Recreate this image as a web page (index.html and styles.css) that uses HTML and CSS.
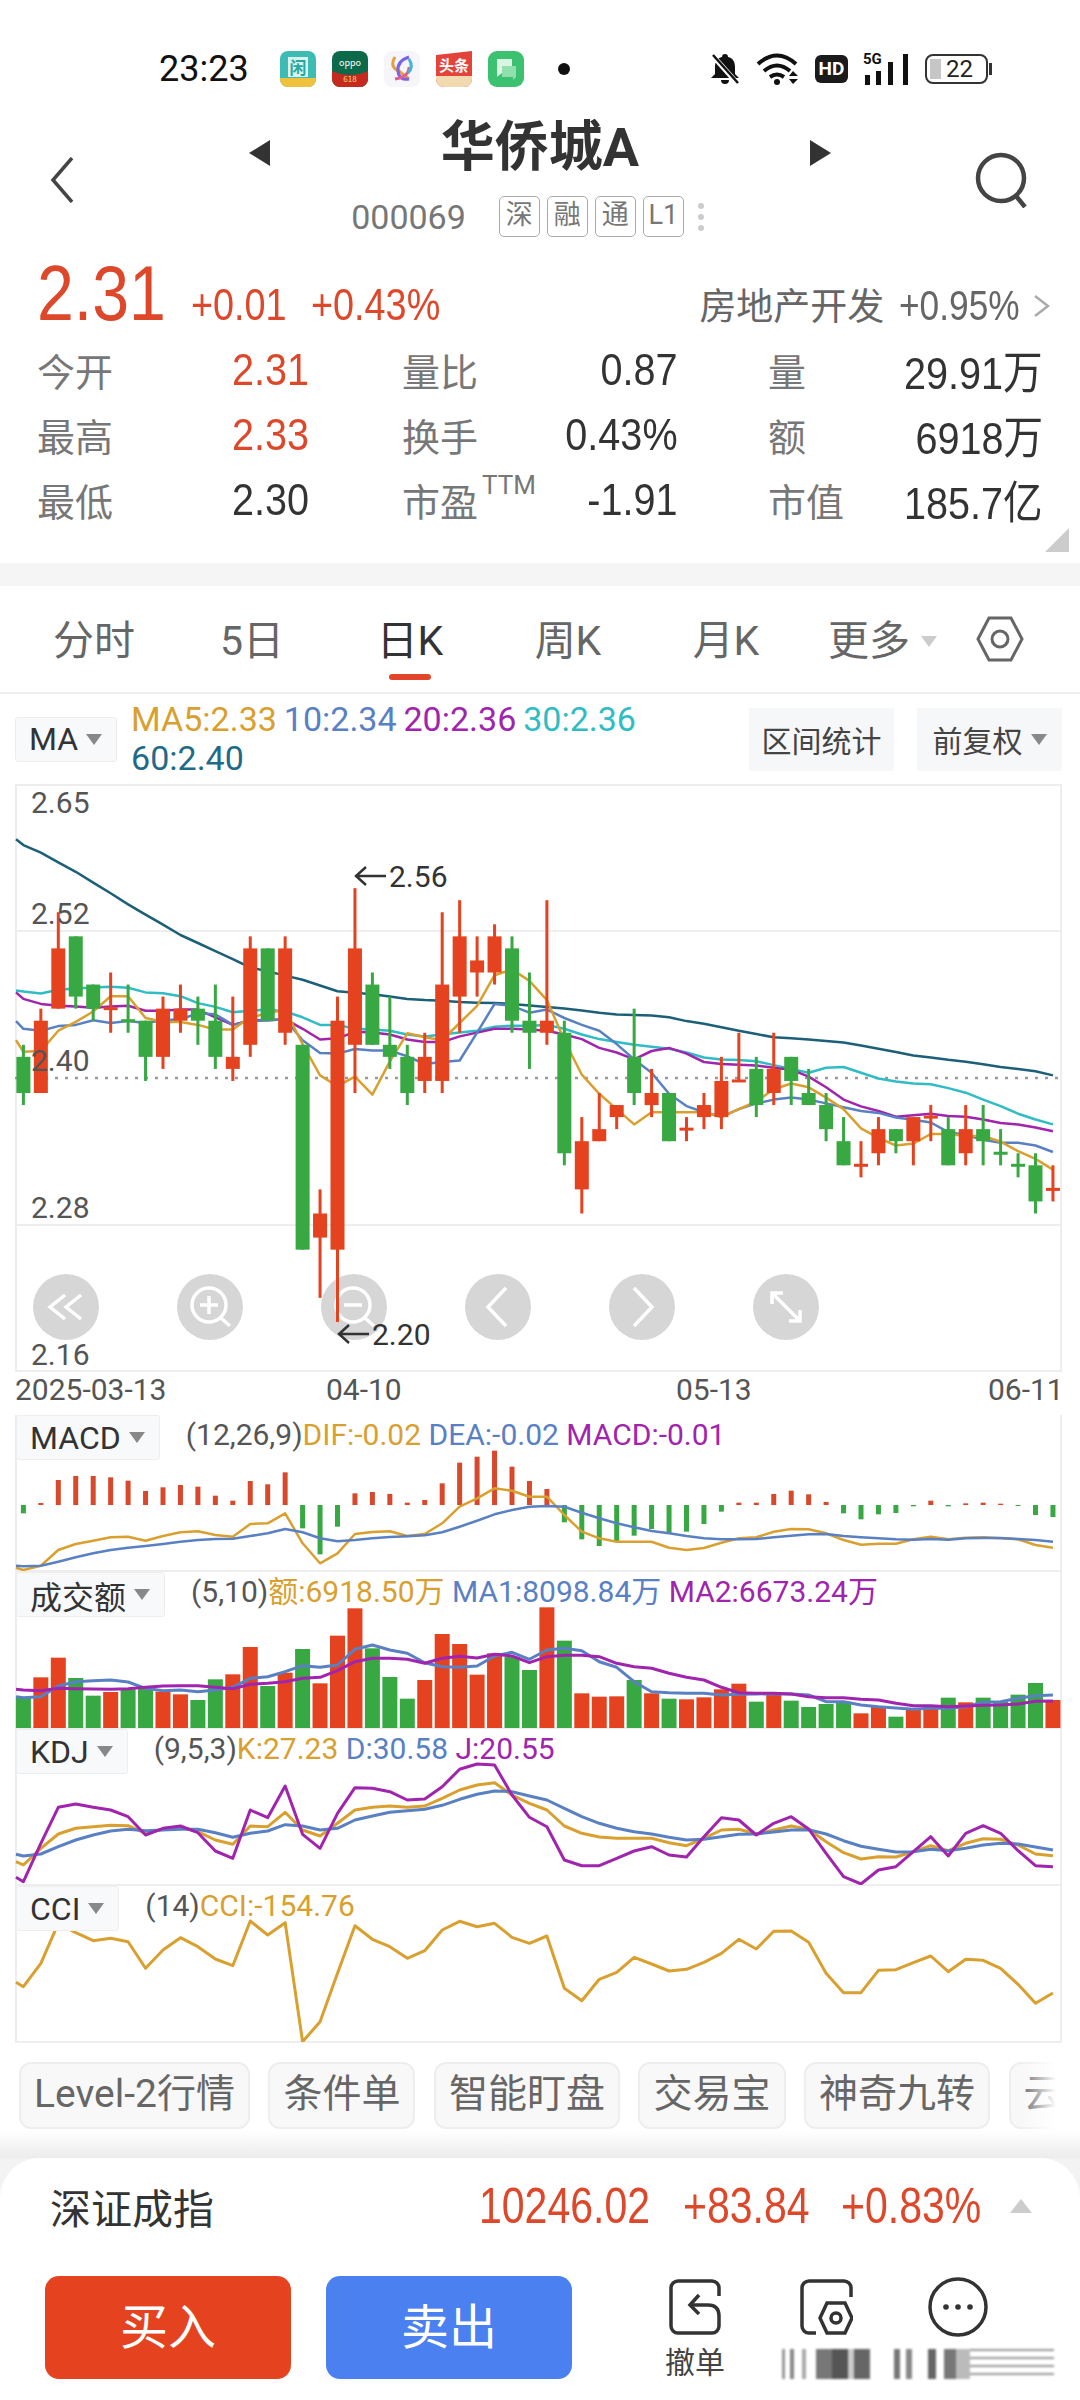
FILE: index.html
```html
<!DOCTYPE html>
<html lang="zh-CN">
<head>
    <meta charset="UTF-8">
    <meta name="viewport" content="width=device-width, initial-scale=1.0">
    <title>华侨城A</title>
    <link rel="stylesheet" href="styles.css">
</head>
<body>
    <div class="status">
        <span class="clock">23:23</span>
        <div class="app-icons">
            <svg class="app" viewBox="0 0 36 36"><rect width="36" height="36" rx="8" fill="#3dbcb4"/><path d="M0 27h36v1a8 8 0 0 1-8 8H8a8 8 0 0 1-8-8z" fill="#eec23d"/><rect x="8" y="6" width="20" height="20" fill="#d9f3ef"/><text x="18" y="23" class="app-text app-mid">闲</text></svg>
            <svg class="app" viewBox="0 0 36 36"><rect width="36" height="36" rx="8" fill="#0c6a4a"/><path d="M0 20q18 8 36 0v8a8 8 0 0 1-8 8H8a8 8 0 0 1-8-8z" fill="#c62a1f"/><text x="18" y="15" class="app-text app-tiny">oppo</text><text x="18" y="31" class="app-text app-tiny2">618</text></svg>
            <svg class="app" viewBox="0 0 36 36"><rect width="36" height="36" rx="8" fill="#f6f5fa"/><path d="M11 6q-6 10 4 14l10 8" fill="none" stroke="#e5a23c" stroke-width="3"/><path d="M25 6q-12 4-11 14t11 8" fill="none" stroke="#7a63e8" stroke-width="3"/><path d="M11 28q14-2 14-12" fill="none" stroke="#e45c8e" stroke-width="3"/><path d="M25 8q5 8-1 14" fill="none" stroke="#45b4d8" stroke-width="3"/></svg>
            <svg class="app" viewBox="0 0 36 36"><path d="M0 4l36-4v28a8 8 0 0 1-8 8H8a8 8 0 0 1-8-8z" fill="#e4433b"/><path d="M0 25h36v3a8 8 0 0 1-8 8H8a8 8 0 0 1-8-8z" fill="#f1d9b0"/><text x="18" y="20" class="app-text app-head">头条</text></svg>
            <svg class="app" viewBox="0 0 36 36"><rect width="36" height="36" rx="9" fill="#3cc170"/><path d="M9 8h15v14H14l-5 4z" fill="#d9f5e2"/><path d="M14 15h14v11l-3 3v-3H14z" fill="#8fe0ad"/></svg>
        </div>
        <i class="status-dot"></i>
        <div class="sys-icons">
            <svg width="32" height="32" viewBox="0 0 32 32"><path d="M16 1a3 3 0 0 1 3 3c5 1 7 5 7 10v7l4 4H2l4-4v-7c0-5 2-9 7-10a3 3 0 0 1 3-3zM12 27h8a4 4 0 0 1-8 0z" fill="#111"/><path d="M4 3l24 27" stroke="#fff" stroke-width="5"/><path d="M4 2l25 28" stroke="#111" stroke-width="2.5"/></svg>
            <svg width="44" height="32" viewBox="0 0 44 32" fill="none" stroke="#111" stroke-width="4"><path d="M2 11q19-17 38 0M8 18q13-11 26 0M14 24q7-5 14 0"/><circle cx="21" cy="29" r="3" fill="#111" stroke="none"/><path d="M33 23l4-5 5 5zM33 26h9l-5 5z" fill="#111" stroke="none"/></svg>
            <span class="hd">HD</span>
            <div class="signal">
                <span class="signal-label">5G</span>
                <svg width="47" height="31" viewBox="0 0 47 31" fill="#111"><rect x="2" y="21" width="5" height="10"/><rect x="13" y="17" width="5" height="14"/><rect x="25" y="8" width="5" height="23"/><rect x="40" y="0" width="5" height="31"/></svg>
            </div>
            <div class="battery"><i class="battery-level"></i><span>22</span></div>
        </div>
    </div>

    <div class="header">
        <svg class="back" width="24" height="46" viewBox="0 0 24 46" fill="none" stroke="#444" stroke-width="3.5"><path d="M22 1L3 23l19 22"/></svg>
        <i class="nav-arrow prev"></i>
        <div class="stock">
            <h1>华侨城A</h1>
            <div class="stock-meta">
                <span class="stock-code">000069</span>
                <span class="tag">深</span>
                <span class="tag">融</span>
                <span class="tag">通</span>
                <span class="tag">L1</span>
                <span class="tag-more"><i></i><i></i><i></i></span>
            </div>
        </div>
        <i class="nav-arrow next"></i>
        <svg class="search" width="56" height="56" viewBox="0 0 56 56" fill="none" stroke="#444" stroke-width="4.5"><circle cx="26" cy="26" r="23"/><path d="M41 44l9 11"/></svg>
    </div>

    <div class="quote">
        <div class="quote-top">
            <span class="price red">2.31</span>
            <span class="change red">+0.01</span>
            <span class="change red">+0.43%</span>
            <div class="sector">
                <span>房地产开发</span>
                <span class="change sector-change">+0.95%</span>
                <svg width="17" height="25" viewBox="0 0 17 25" fill="none" stroke="#aaa" stroke-width="2.5"><path d="M2 1l13 10L2 21"/></svg>
            </div>
        </div>
        <div class="stats">
            <div class="stat stat-left"><span>今开</span><b class="red">2.31</b></div>
            <div class="stat stat-mid"><span>量比</span><b>0.87</b></div>
            <div class="stat stat-right"><span>量</span><b>29.91万</b></div>
            <div class="stat stat-left"><span>最高</span><b class="red">2.33</b></div>
            <div class="stat stat-mid"><span>换手</span><b>0.43%</b></div>
            <div class="stat stat-right"><span>额</span><b>6918万</b></div>
            <div class="stat stat-left"><span>最低</span><b>2.30</b></div>
            <div class="stat stat-mid"><span>市盈<sup>TTM</sup></span><b>-1.91</b></div>
            <div class="stat stat-right"><span>市值</span><b>185.7亿</b></div>
        </div>
        <i class="fold"></i>
    </div>

    <div class="band"></div>

    <div class="tabs">
        <span class="tab">分时</span>
        <span class="tab">5日</span>
        <span class="tab active">日K</span>
        <span class="tab">周K</span>
        <span class="tab">月K</span>
        <span class="tab-more">更多<i class="tri tri-light"></i></span>
        <svg class="tab-gear" width="48" height="46" viewBox="0 0 48 46" fill="none" stroke="#666" stroke-width="3"><path d="M13 2h22l11 21-11 21H13L2 23z"/><circle cx="24" cy="23" r="8"/></svg>
    </div>

    <div class="toolbar">
        <span class="pick">MA<i class="tri"></i></span>
        <div class="ma-legend">
            <span class="orange">MA5:2.33</span>
            <span class="blue">10:2.34</span>
            <span class="purple">20:2.36</span>
            <span class="cyan">30:2.36</span>
            <span class="teal">60:2.40</span>
        </div>
        <div class="toolbar-right">
            <span class="tool-btn">区间统计</span>
            <span class="tool-btn">前复权<i class="tri"></i></span>
        </div>
    </div>

    <div class="main-chart">
        <svg class="chart" viewBox="15 784 1047 588" width="1047" height="588">
            <path class="grid-line" d="M15 931H1062M15 1225H1062"/>
            <path class="mid-line" d="M15 1078H1062"/>
            <g id="priceLines" fill="none"></g>
            <g id="priceCandles"></g>
            <text class="axis" x="31" y="813">2.65</text>
            <text class="axis" x="31" y="924">2.52</text>
            <text class="axis" x="31" y="1071">2.40</text>
            <text class="axis" x="31" y="1218">2.28</text>
            <text class="axis" x="31" y="1365">2.16</text>
            <path class="marker" d="M386 876H356M366 867l-10 9 10 9"/>
            <text class="axis axis-dark" x="389" y="887">2.56</text>
            <path class="marker" d="M369 1334H339M349 1325l-10 9 10 9"/>
            <text class="axis axis-dark" x="372" y="1345">2.20</text>
        </svg>
        <div class="chart-tools">
            <svg class="round-btn" viewBox="0 0 66 66"><path d="M32 21L17 33l15 12M48 21L33 33l15 12"/></svg>
            <svg class="round-btn" viewBox="0 0 66 66"><circle cx="32" cy="31" r="17"/><path d="M23 31h18M32 22v18M44 44l9 8"/></svg>
            <svg class="round-btn" viewBox="0 0 66 66"><circle cx="32" cy="31" r="17"/><path d="M23 31h18M44 44l9 8"/></svg>
            <svg class="round-btn" viewBox="0 0 66 66"><path d="M41 14L23 33l18 19"/></svg>
            <svg class="round-btn" viewBox="0 0 66 66"><path d="M25 14l18 19-18 19"/></svg>
            <svg class="round-btn" viewBox="0 0 66 66"><path d="M19 19l28 28M19 30V19h11M47 36v11H36"/></svg>
        </div>
    </div>

    <div class="dates">
        <span>2025-03-13</span>
        <span>04-10</span>
        <span>05-13</span>
        <span>06-11</span>
    </div>

    <div class="panel">
        <div class="panel-head">
            <span class="pick">MACD<i class="tri"></i></span>
            <div class="panel-legend"><span class="muted">(12,26,9)</span><span class="orange">DIF:-0.02</span> <span class="blue">DEA:-0.02</span> <span class="purple">MACD:-0.01</span></div>
        </div>
        <svg id="macdChart" class="chart" viewBox="15 1415 1047 156" width="1047" height="156"></svg>
    </div>
    <div class="panel">
        <div class="panel-head">
            <span class="pick">成交额<i class="tri"></i></span>
            <div class="panel-legend"><span class="muted">(5,10)</span><span class="orange">额:6918.50万</span> <span class="blue">MA1:8098.84万</span> <span class="purple">MA2:6673.24万</span></div>
        </div>
        <svg id="volumeChart" class="chart" viewBox="15 1572 1047 156" width="1047" height="156"></svg>
    </div>
    <div class="panel">
        <div class="panel-head">
            <span class="pick">KDJ<i class="tri"></i></span>
            <div class="panel-legend"><span class="muted">(9,5,3)</span><span class="orange">K:27.23</span> <span class="blue">D:30.58</span> <span class="purple">J:20.55</span></div>
        </div>
        <svg id="kdjChart" class="chart" viewBox="15 1729 1047 156" width="1047" height="156"></svg>
    </div>
    <div class="panel">
        <div class="panel-head">
            <span class="pick">CCI<i class="tri"></i></span>
            <div class="panel-legend"><span class="muted">(14)</span><span class="orange">CCI:-154.76</span></div>
        </div>
        <svg id="cciChart" class="chart" viewBox="15 1886 1047 156" width="1047" height="156"></svg>
    </div>

    <div class="chips">
        <span class="chip">Level-2行情</span>
        <span class="chip">条件单</span>
        <span class="chip">智能盯盘</span>
        <span class="chip">交易宝</span>
        <span class="chip">神奇九转</span>
        <span class="chip">云</span>
    </div>

    <div class="dock-wrap">
        <div class="dock">
            <div class="index-row">
                <span class="index-name">深证成指</span>
                <span class="index-num index-value red">10246.02</span>
                <span class="index-num index-points red">+83.84</span>
                <span class="index-num index-rate red">+0.83%</span>
                <i class="index-arrow"></i>
            </div>
            <div class="actions">
                <span class="trade buy">买入</span>
                <span class="trade sell">卖出</span>
                <div class="quick">
                    <div class="quick-icons">
                        <svg width="54" height="56" viewBox="0 0 54 56" fill="none" stroke="#333" stroke-width="3.5"><path d="M51 17V9a7 7 0 0 0-7-7H10a7 7 0 0 0-7 7v38a7 7 0 0 0 7 7h34a7 7 0 0 0 7-7V37q0-11-11-11H24"/><path d="M31 16L22 26l9 9"/></svg>
                        <svg width="54" height="56" viewBox="0 0 54 56" fill="none" stroke="#333" stroke-width="3.5"><path d="M52 18V9a7 7 0 0 0-7-7H10a7 7 0 0 0-7 7v38a7 7 0 0 0 7 7h7"/><path d="M28 24h18l7 15-7 15H28l-7-15z"/><circle cx="37" cy="39" r="5"/></svg>
                        <svg width="60" height="60" viewBox="0 0 60 60" fill="none" stroke="#333" stroke-width="3.5"><circle cx="30" cy="30" r="28"/><circle cx="18" cy="30" r="2.8" fill="#333" stroke="none"/><circle cx="30" cy="30" r="2.8" fill="#333" stroke="none"/><circle cx="42" cy="30" r="2.8" fill="#333" stroke="none"/></svg>
                    </div>
                    <div class="quick-labels">
                        <span>撤单</span>
                        <div class="smudge"><i class="smudge-bars"></i><i class="smudge-lines"></i></div>
                    </div>
                </div>
            </div>
        </div>
    </div>

    <script src="charts.js"></script>
</body>
</html>
```

FILE: styles.css
```css
* {
    box-sizing: border-box;
}

body {
    margin: 0;
    width: 1080px;
    height: 2400px;
    overflow: hidden;
    background: #fff;
    color: #333;
    font-family: Roboto, "Noto Sans CJK SC", sans-serif;
}

i {
    display: block;
    font-style: normal;
}

.red { color: #dd472a; }
.orange { color: #d9a02f; }
.blue { color: #5a80c4; }
.purple { color: #a024ae; }
.cyan { color: #30bcc4; }
.teal { color: #1f6a88; }
.muted { color: #555; }

/* status bar */
.status {
    display: flex;
    align-items: center;
    height: 110px;
    padding: 48px 92px 20px 159px;
}

.clock {
    font-size: 36px;
    color: #111;
}

.app-icons {
    display: flex;
    gap: 16px;
    margin-left: 31px;
}

.app {
    width: 36px;
    height: 36px;
}

.app-text {
    font-family: "Noto Sans CJK SC", sans-serif;
    text-anchor: middle;
}

.app-mid { font-size: 17px; fill: #2ba69e; font-weight: 700; }
.app-tiny { font-size: 9px; fill: #fff; }
.app-tiny2 { font-size: 8px; fill: #f6d98a; }
.app-head { font-size: 15px; fill: #fff; font-weight: 700; }

.status-dot {
    width: 12px;
    height: 12px;
    margin-left: 34px;
    border-radius: 50%;
    background: #111;
}

.sys-icons {
    display: flex;
    align-items: center;
    gap: 15px;
    margin-left: auto;
}

.hd {
    width: 33px;
    height: 28px;
    border-radius: 6px;
    background: #1b1b1b;
    color: #fff;
    font-size: 19px;
    font-weight: 700;
    line-height: 28px;
    text-align: center;
}

.signal {
    position: relative;
    width: 47px;
    height: 31px;
}

.signal-label {
    position: absolute;
    top: -3px;
    left: 0;
    font-size: 15px;
    font-weight: 700;
    line-height: 16px;
    color: #111;
}

.battery {
    position: relative;
    width: 63px;
    height: 30px;
    border: 2px solid #333;
    border-radius: 8px;
    font-size: 24px;
    line-height: 26px;
    text-align: center;
    color: #222;
}

.battery::after {
    content: "";
    position: absolute;
    top: 7px;
    right: -6px;
    width: 3px;
    height: 12px;
    background: #333;
}

.battery span {
    position: relative;
    margin-left: 6px;
}

.battery-level {
    position: absolute;
    top: 3px;
    bottom: 3px;
    left: 3px;
    width: 11px;
    background: #c6c6c6;
}

/* header */
.header {
    display: flex;
    align-items: flex-start;
    height: 140px;
    padding: 5px 49px 0 50px;
}

.back {
    margin-top: 42px;
}

.nav-arrow {
    width: 0;
    height: 0;
    margin-top: 25px;
    border-top: 13px solid transparent;
    border-bottom: 13px solid transparent;
}

.prev {
    margin-left: 175px;
    border-right: 21px solid #333;
}

.next {
    border-left: 21px solid #333;
}

.search {
    margin-top: 37px;
    margin-left: 144px;
}

.stock {
    flex: 1;
    display: flex;
    flex-direction: column;
    align-items: center;
}

.stock h1 {
    margin: 0;
    font-size: 54px;
    font-weight: 700;
    line-height: 66px;
    color: #333;
}

.stock-meta {
    display: flex;
    align-items: center;
    margin-top: 15px;
    padding-right: 25px;
}

.stock-code {
    margin-right: 33px;
    font-size: 34px;
    color: #777;
}

.tag {
    width: 41px;
    height: 41px;
    margin-right: 7px;
    border: 1.5px solid #aaa;
    border-radius: 5px;
    color: #777;
    font-size: 27px;
    line-height: 37px;
    text-align: center;
}

.tag-more {
    display: flex;
    flex-direction: column;
    gap: 5px;
    margin-left: 7px;
}

.tag-more i {
    width: 6px;
    height: 6px;
    border-radius: 50%;
    background: #ccc;
}

/* quote: the digits of this block are a narrow face, Liberation Sans squeezed */
.quote {
    position: relative;
    height: 313px;
    padding-left: 37px;
}

.quote-top {
    display: flex;
    align-items: baseline;
    height: 87px;
    padding-right: 30px;
}

.price,
.change,
.stat b,
.index-num {
    display: inline-block;
    font-family: "Liberation Sans", "Noto Sans CJK SC", sans-serif;
    font-weight: 400;
    transform: scaleX(0.82);
    transform-origin: left center;
}

.price {
    margin-right: 4px;
    font-size: 77px;
    line-height: 86px;
    transform: scaleX(0.86);
}

.change {
    margin-right: 6px;
    font-size: 45px;
    transform: scaleX(0.84);
}

.sector {
    display: flex;
    align-items: baseline;
    margin-left: auto;
    color: #666;
    font-size: 37px;
}

.sector-change {
    margin: 0 -10px 0 15px;
    font-size: 42px;
    color: #666;
}

.stats {
    display: grid;
    grid-template-columns: 365px 366px 275px;
    grid-auto-rows: 65px;
}

.stat {
    display: flex;
    align-items: center;
    justify-content: space-between;
    color: #777;
    font-size: 38px;
}

.stat b {
    color: #333;
    font-size: 45px;
    transform: scaleX(0.88);
    transform-origin: right center;
}

.stat b.red {
    color: #dd472a;
}

.stat-left {
    justify-content: flex-start;
}

.stat-left span {
    width: 195px;
}

.stat-left b {
    transform-origin: left center;
}

.stat-mid {
    width: 276px;
}

.stat sup {
    margin-left: 4px;
    font-size: 26px;
    line-height: 0;
    vertical-align: 22px;
}

.fold {
    position: absolute;
    right: 11px;
    bottom: 11px;
    width: 0;
    height: 0;
    border-left: 24px solid transparent;
    border-bottom: 24px solid #ccc;
}

.band {
    height: 23px;
    background: #f5f5f5;
}

/* period tabs */
.tabs {
    display: flex;
    align-items: flex-start;
    height: 108px;
    padding: 30px 0 0 15px;
    border-bottom: 2px solid #eee;
    color: #666;
    font-size: 41px;
    line-height: 50px;
}

.tab {
    position: relative;
    width: 158px;
    height: 50px;
    text-align: center;
}

.tab.active {
    color: #333;
}

.tab.active::after {
    content: "";
    position: absolute;
    top: 58px;
    left: 58px;
    width: 42px;
    height: 6px;
    border-radius: 3px;
    background: #e2452a;
}

.tab-more {
    display: flex;
    align-items: center;
    margin-left: 23px;
}

.tab-more .tri {
    margin-left: 11px;
}

.tab-gear {
    margin: 0 0 0 39px;
}

.tri {
    display: inline-block;
    width: 0;
    height: 0;
    margin-left: 8px;
    border-left: 8px solid transparent;
    border-right: 8px solid transparent;
    border-top: 11px solid #888;
}

.tri-light {
    border-top-color: #ccc;
}

/* MA toolbar */
.toolbar {
    display: flex;
    align-items: center;
    height: 90px;
    padding: 0 18px 0 15px;
}

.pick {
    display: inline-flex;
    align-items: center;
    height: 45px;
    padding: 0 14px 0 13px;
    border: 1px solid #eee;
    border-radius: 3px;
    background: #f8f9fb;
    color: #333;
    font-size: 32px;
}

.ma-legend {
    width: 520px;
    margin-left: 14px;
    font-size: 34px;
    line-height: 39px;
    word-spacing: -1.5px;
}

.toolbar-right {
    display: flex;
    gap: 23px;
    margin-left: auto;
}

.tool-btn {
    display: flex;
    align-items: center;
    justify-content: center;
    width: 145px;
    height: 63px;
    background: #f6f7f9;
    color: #444;
    font-size: 30px;
}

/* charts */
.main-chart,
.panel {
    position: relative;
    width: 1047px;
    margin-left: 15px;
    border: solid #eee;
    border-width: 0 2px 0 2px;
}

.main-chart {
    height: 588px;
    border-width: 2px 2px 2px 2px;
}

.chart {
    display: block;
    margin: 0 -2px;
}

.main-chart .chart {
    position: relative;
    z-index: 1;
    margin: -2px -2px;
}

.grid-line {
    fill: none;
    stroke: #eee;
    stroke-width: 2;
}

.mid-line {
    fill: none;
    stroke: #999;
    stroke-width: 2.5;
    stroke-dasharray: 3 7;
}

.axis {
    fill: #555;
    font-size: 30px;
}

.axis-dark {
    fill: #333;
}

.marker {
    fill: none;
    stroke: #333;
    stroke-width: 2.5;
}

.chart-tools {
    position: absolute;
    top: 488px;
    left: 16px;
    display: flex;
    gap: 78px;
}

.round-btn {
    width: 66px;
    height: 66px;
    border-radius: 50%;
    background: #d6d6d6;
    fill: none;
    stroke: #fff;
    stroke-width: 3.5;
}

.dates {
    display: grid;
    grid-template-columns: 311px 350px 312px auto;
    align-items: center;
    height: 43px;
    padding: 0 0 7px 15px;
    color: #555;
    font-size: 30px;
    line-height: 34px;
}

.panel {
    height: 157px;
    border-bottom-width: 2px;
}

.panel-head {
    position: absolute;
    top: 0;
    left: -1px;
    display: flex;
    align-items: center;
}

.panel-legend {
    margin: -5px 0 0 26px;
    font-size: 30px;
    line-height: 40px;
    white-space: nowrap;
}

/* shortcut chips */
.chips {
    position: relative;
    display: flex;
    gap: 18.5px;
    height: 115px;
    padding: 19px 0 0 19px;
    overflow: hidden;
    background: linear-gradient(#fff 76%, #ececec);
}

.chips::after {
    content: "";
    position: absolute;
    top: 19px;
    right: 0;
    width: 60px;
    height: 67px;
    background: linear-gradient(90deg, rgba(255, 255, 255, 0), #fff 60%);
}

.chip {
    flex: none;
    height: 67px;
    padding: 0 13px;
    border: 2px solid #eee;
    border-radius: 12px;
    background: #f8f8f8;
    color: #666;
    font-size: 39px;
    line-height: 60px;
}

/* bottom dock */
.dock-wrap {
    background: #f3f3f3;
}

.dock {
    height: 243px;
    border-radius: 40px 40px 0 0;
    background: #fff;
}

.index-row {
    display: flex;
    align-items: center;
    height: 118px;
    padding: 0 0 22px 50px;
}

.index-name {
    width: 160px;
    font-size: 41px;
    white-space: nowrap;
    color: #333;
}

.index-num {
    font-size: 50px;
}

.index-value {
    margin: 0 -5px 0 269px;
}

.index-points {
    margin-right: 4px;
}

.index-rate {
    margin-right: -2px;
}

.index-arrow {
    width: 0;
    height: 0;
    border-left: 11px solid transparent;
    border-right: 11px solid transparent;
    border-bottom: 14px solid #ccc;
}

.actions {
    display: flex;
    padding-left: 45px;
}

.trade {
    width: 246px;
    height: 103px;
    border-radius: 14px;
    color: #fff;
    font-size: 48px;
    line-height: 103px;
    text-align: center;
}

.buy {
    background: #e5431f;
}

.sell {
    margin-left: 35px;
    background: #4a80ef;
}

.quick {
    margin-left: 93px;
}

.quick-icons {
    display: flex;
    align-items: center;
    gap: 77px;
    height: 62px;
    padding-left: 3px;
}

.quick-icons svg:last-child {
    margin-left: -2px;
}

.quick-labels {
    display: flex;
    align-items: center;
    gap: 57px;
    margin-top: 8px;
    color: #444;
    font-size: 30px;
    line-height: 32px;
}

.smudge {
    display: flex;
    width: 272px;
    height: 30px;
    margin-top: 3px;
    filter: blur(1.2px);
}

.smudge-bars {
    width: 188px;
    background: linear-gradient(90deg, #999 0 3px, #fff 3px 8px, #888 8px 12px, #fff 12px 20px, #aaa 20px 24px, #fff 24px 34px, #777 34px 50px, #555 50px 66px, #ccc 66px 72px, #666 72px 88px, #fff 88px 112px, #777 112px 118px, #fff 118px 124px, #888 124px 130px, #fff 130px 146px, #666 146px 154px, #fff 154px 162px, #777 162px 174px, #bbb 174px 188px);
}

.smudge-lines {
    width: 84px;
    background: repeating-linear-gradient(#999 0 2px, #fff 2px 8px);
}
```

FILE: charts.js
```js
document.addEventListener('DOMContentLoaded', function() {
    const SVG_NS = 'http://www.w3.org/2000/svg';
    const RED = '#e5431f';
    const GREEN = '#38a843';
    const ORANGE = '#d9a02f';
    const BLUE = '#5a80c4';
    const PURPLE = '#a024ae';
    const CYAN = '#30bcc4';
    const TEAL = '#1c5f78';

    // one candle step on the shared x axis
    const xAt = i => 23.4 + 17.45 * i;

    function add(parent, tag, attrs) {
        const node = document.createElementNS(SVG_NS, tag);
        Object.keys(attrs).forEach(key => node.setAttribute(key, attrs[key]));
        parent.appendChild(node);
        return node;
    }

    // traces: first value sits on the left frame, then one value per candle
    function drawTrace(parent, values, color, toY, width) {
        const points = values.map((v, k) => (k === 0 ? 16 : xAt(k - 1)) + ',' + toY(v).toFixed(1));
        add(parent, 'polyline', { points: points.join(' '), fill: 'none', stroke: color, 'stroke-width': width || 2.5, 'stroke-linejoin': 'round' });
    }

    // --- price chart: [colour, body top, body bottom, high, low] in cents ---
    const candles = [
        ['g',242,239,243,238],['r',245,239,246,239],['r',251,246,254,246],['g',252,247,252,246],['g',248,246,248,245],
        ['r',246,246,249,244],['g',245,245,248,244],['g',245,242,245,240],['r',246,242,247,241],['r',246,245,248,244],
        ['g',246,245,247,243],['g',245,242,248,241],['r',242,241,247,240],['r',251,243,252,242],['g',251,245,251,245],
        ['r',251,244,252,243],['g',243,226,243,226],['r',229,227,231,222],['r',245,226,247,220],['r',251,243,256,239],
        ['g',248,243,249,243],['g',243,242,247,241],['g',242,239,243,238],['r',242,240,244,239],['r',248,240,254,239],
        ['r',252,247,255,244],['r',250,249,252,247],['r',252,249,253,248],['g',251,245,252,244],['g',245,244,249,241],
        ['r',245,244,255,243],['g',244,234,245,233],['r',235,231,237,229],['r',236,235,239,235],['r',238,237,238,236],
        ['g',242,239,246,238],['r',239,238,241,237],['g',239,235,239,235],['r',236,236,237,235],['r',238,237,239,236],
        ['r',240,237,242,236],['r',240,240,244,240],['g',241,238,242,237],['r',241,239,244,238],['g',242,240,242,238],
        ['g',239,238,241,238],['g',238,236,239,235],['g',235,233,237,233],['r',233,233,235,232],['r',236,234,237,233],
        ['g',236,235,236,234],['r',237,235,237,233],['r',237,237,238,235],['g',236,233,237,233],['r',236,234,238,233],
        ['g',236,235,238,233],['g',234,234,236,233],['g',233,233,234,232],['g',233,230,234,229],['r',231,231,233,230]
    ];
    const priceY = cents => 948.4 + (251 - cents) * 12.05;
    const candleLayer = document.getElementById('priceCandles');
    candles.forEach((c, i) => {
        const color = c[0] === 'r' ? RED : GREEN;
        const x = xAt(i);
        add(candleLayer, 'rect', { x: x - 1.5, y: priceY(c[3]), width: 3, height: priceY(c[4]) - priceY(c[3]), fill: color });
        const top = priceY(c[1]);
        const height = Math.max(priceY(c[2]) - top, 3);
        add(candleLayer, 'rect', { x: x - 7, y: c[1] === c[2] ? top - 1.5 : top, width: 14, height: height, fill: color });
    });

    const ma5 = [680,710,708,655,632,605,565,565,622,632,632,640,652,652,620,610,600,690,772,800,775,822,735,662,672,680,635,590,510,495,525,575,680,770,820,860,900,868,868,868,868,880,860,840,808,793,803,830,860,910,935,955,950,925,925,930,930,945,970,990,1018];
    const ma10 = [630,650,655,643,640,628,635,630,635,628,625,610,612,640,630,628,625,680,713,715,703,707,707,722,742,737,733,660,585,590,608,600,622,640,655,690,730,765,820,852,868,880,860,845,835,830,835,845,855,865,870,882,888,895,920,928,940,948,948,955,972];
    const ma20 = [555,572,585,590,592,595,592,590,603,603,600,600,620,640,628,628,625,650,678,675,658,660,665,678,685,685,670,660,650,650,652,655,665,677,700,712,730,708,700,715,737,742,744,746,752,757,775,803,835,853,865,880,876,872,878,880,887,896,900,908,918];
    const ma30 = [550,553,558,548,545,542,540,543,555,557,565,583,593,607,603,600,605,620,640,640,650,652,655,665,670,665,660,655,645,642,642,640,650,665,677,685,692,697,702,712,725,730,732,735,745,755,765,752,750,765,780,788,793,795,805,817,835,852,872,887,900];
    const ma60 = [155,170,190,215,240,268,296,325,352,378,405,426,447,468,490,500,511,522,537,552,556,560,566,572,575,577,580,582,583,585,589,593,597,602,608,613,614,615,620,630,637,646,655,664,672,675,678,682,686,694,702,711,720,725,731,736,743,750,755,761,772];
    const lineLayer = document.getElementById('priceLines');
    const traceY = v => 780 + v * 0.3827;
    drawTrace(lineLayer, ma60, TEAL, traceY);
    drawTrace(lineLayer, ma30, CYAN, traceY);
    drawTrace(lineLayer, ma20, PURPLE, traceY);
    drawTrace(lineLayer, ma10, BLUE, traceY);
    drawTrace(lineLayer, ma5, ORANGE, traceY);

    // --- MACD ---
    const macdChart = document.getElementById('macdChart');
    const macdBars = [-25,6,75,87,87,83,73,42,53,60,55,28,13,72,62,98,-70,-148,-65,35,39,33,7,15,65,127,145,163,115,72,48,-52,-103,-123,-108,-92,-72,-85,-80,-57,-20,7,7,33,43,32,9,-25,-43,-28,-24,-4,13,-4,5,7,4,-3,-30,-36];
    macdBars.forEach((v, i) => {
        const height = Math.abs(v) / 3;
        add(macdChart, 'rect', { x: xAt(i) - 2.5, y: v > 0 ? 1505 - height : 1505, width: 5, height: height, fill: v > 0 ? '#d8482a' : GREEN });
    });
    const dif = [503,510,497,450,432,422,412,410,422,408,397,394,405,410,372,370,340,430,490,460,402,396,394,408,402,370,320,295,265,272,290,290,345,395,415,425,425,425,443,450,444,428,415,412,395,387,388,400,420,434,431,431,418,410,418,413,412,415,418,435,443];
    const dea = [497,499,497,485,472,460,450,443,438,432,425,420,417,416,408,400,387,397,415,424,420,415,411,409,406,397,380,362,343,330,320,318,320,338,355,370,382,393,400,408,415,418,418,417,412,407,403,402,408,412,415,418,419,417,419,415,414,414,417,420,425];
    const macdY = v => 1400 + v / 3;
    drawTrace(macdChart, dif, ORANGE, macdY);
    drawTrace(macdChart, dea, BLUE, macdY);

    // --- turnover bars: [colour, top] ---
    const volumeChart = document.getElementById('volumeChart');
    const volume = ['g893','r832','r773','g834','g887','r876','g868','g865','r875','r883','g900','g838','r823','r741','g858','r818','g747','r850','r707','r625','g745','g831','g896','r840','r702','r732','r824','r760','g770','g810','r622','g722','r880','r890','r889','g840','r880','g896','r898','r892','r868','r851','g905','r880','g902','g921','g912','g905','r940','r920','g950','r928','r915','g893','r907','g893','g905','g884','g849','r900'];
    volume.forEach((v, i) => {
        const top = 1400 + Number(v.slice(1)) / 3;
        add(volumeChart, 'rect', { x: xAt(i) - 7.5, y: top, width: 15, height: 1728 - top, fill: v[0] === 'r' ? RED : GREEN });
    });
    const vol1 = [890,893,890,858,845,842,840,846,865,872,870,875,870,862,835,830,815,797,802,795,748,735,750,760,788,800,802,798,768,757,778,750,745,752,785,802,845,875,878,880,880,885,883,882,881,882,885,905,905,915,920,924,928,925,925,920,907,905,895,887,885];
    const vol2 = [868,870,872,865,866,867,868,866,862,858,857,857,862,866,853,850,845,835,832,812,785,775,775,778,790,775,769,774,763,768,788,770,766,766,770,790,800,805,820,832,840,862,878,880,880,882,890,893,893,898,900,910,917,917,920,918,916,915,912,904,903];
    drawTrace(volumeChart, vol1, BLUE, macdY, 3);
    drawTrace(volumeChart, vol2, PURPLE, macdY, 3);

    // --- KDJ ---
    const kdjChart = document.getElementById('kdjChart');
    const k = [395,405,355,312,295,290,286,287,310,298,292,305,330,343,288,290,247,300,318,280,240,232,228,232,228,205,180,165,158,195,220,240,288,310,321,325,325,325,338,347,325,300,298,312,300,288,298,335,368,387,380,381,365,347,362,340,326,328,345,372,377];
    const d = [373,378,372,350,330,315,303,298,302,300,298,298,308,322,310,303,284,288,300,295,270,258,247,242,238,226,208,193,183,185,198,210,235,260,280,295,305,312,322,330,328,320,313,312,306,300,299,312,332,349,358,366,365,358,362,355,345,340,342,351,360];
    const j = [442,455,340,232,222,232,240,260,315,295,288,308,363,385,240,263,168,313,355,250,173,175,185,210,207,170,118,102,105,195,262,290,390,407,407,385,363,350,375,381,320,263,270,315,280,260,297,370,440,462,420,410,365,320,378,310,287,310,362,407,410];
    const lowerY = v => 1730 + v / 3;
    drawTrace(kdjChart, k, ORANGE, lowerY, 3);
    drawTrace(kdjChart, d, BLUE, lowerY, 3);
    drawTrace(kdjChart, j, PURPLE, lowerY, 3);

    // --- CCI ---
    const cci = [757,770,700,580,608,632,625,635,715,660,623,650,687,707,573,615,578,935,875,730,587,628,650,685,662,600,574,590,580,622,640,618,775,812,748,727,682,702,723,718,697,670,628,657,604,603,637,730,788,788,721,719,698,678,725,688,691,715,763,820,789];
    drawTrace(document.getElementById('cciChart'), cci, ORANGE, lowerY, 3);
});
```
